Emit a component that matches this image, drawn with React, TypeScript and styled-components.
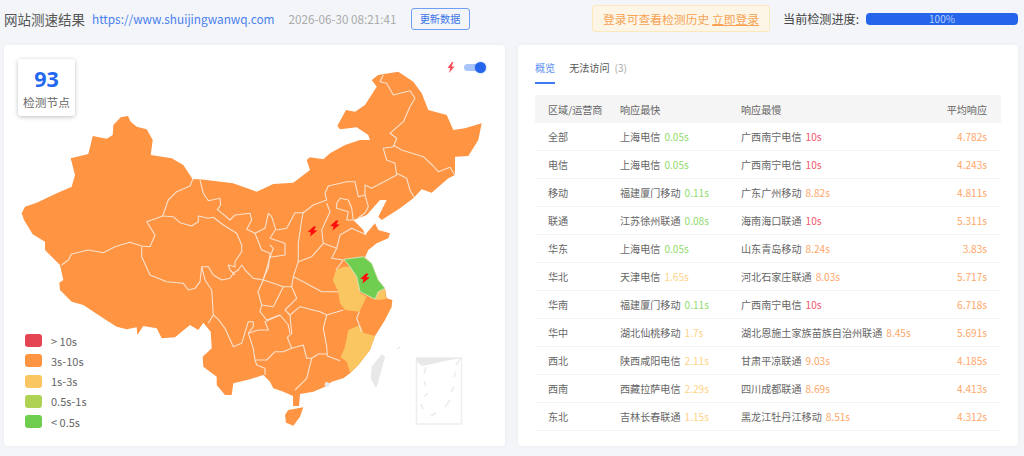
import { FC } from "react";
import styled, { createGlobalStyle } from "styled-components";

const GlobalStyle = createGlobalStyle`
  html, body {
    margin: 0;
    padding: 0;
    background: #f3f5f9;
    font-family: "Noto Sans CJK SC", "Noto Sans", sans-serif;
    color: #555;
  }
`;

const COLORS = {
  red: "#e54452",
  orange: "#ff9443",
  yellow: "#fac661",
  lime: "#aed254",
  green: "#6fce50",
};

const TEXT_COLORS: Record<string, string> = {
  green: "#8fdc6c",
  red: "#f2566e",
  orange: "#ffa769",
  yellow: "#ffd386",
};

const OUTLINE =
  "120.7,117.3 128,116 130.7,121.7 136.7,126.7 146.7,129.3 152.7,140 150.7,155 171.7,158.3 183.3,165 192.7,179.3 200,179.3 233,183.3 250,189.3 256.7,191.7 273.3,184 293.3,182.7 310,170 306.7,160 310,157.3 323.3,159.3 330,153.3 345,145 360,140 370,140 368.3,135 356.7,127.3 340,129.3 337.3,126 346,110 355,111.7 365,105 376.7,86.7 371.7,80 378.3,75 398.3,71.7 413.3,81.7 421.7,93.3 428.3,110 446.7,115 453.3,130 465,128.3 481.7,123.3 478.3,140 468.3,156 455,156.7 455,175 448.3,178.3 431.7,192.7 421.7,189.3 413.3,198.3 400,208.3 381.7,220 378.3,216.7 386.7,200 380,200 366.7,215 353.3,220 363.3,230 365,235 375,223.3 378.3,230 390,233.3 388.3,238.3 376.7,243.3 368.3,250 365,257.3 371.7,263.3 378.3,280 385,288.3 386.7,298.3 392.3,300 391.7,306.7 385,320 375,336 370,350 358.3,365 350,373.3 343.3,378.3 331.7,381.7 325,386.7 313.3,391.7 300,394 299,406 293,406 293,396 283.3,391.7 273.3,388.3 270,381.7 263.3,375 250,379.3 233.3,383.3 231.7,395 225,395 216.7,385 216.7,376.7 203.3,366.7 202.7,356.7 211.7,348.3 210.7,331.7 203.3,322.7 198.3,330 190,325 175,337.3 161.7,338.3 156.7,328.3 143.3,326 137.3,335 136.7,327.3 126.7,329.3 116.7,326.7 103.3,318.3 83.3,305 71.7,301.7 60,290 59.3,282.7 63.3,280 60,265 45,250 45,241.7 32.7,234.3 24,220 21.7,213.3 25,206.7 36.7,202.7 56.7,193.3 71.7,186.7 75,175 70.7,158.3 88.3,154 92.7,136 106.7,138.7 112.7,135 113.3,125";

const HAINAN = "288.3,410 303.3,407.3 300,416.7 293.3,425.7 286,422.7 285,415";

const JIANGSU =
  "344,259.3 363.3,256.7 371.7,263.3 378.3,280 385,288.3 378.3,291.7 375,299.3 366.7,295 360,291.7 356.7,276.7 350,266.7";
const ANHUI =
  "343.3,266.7 350,266.7 356.7,276.7 360,293.3 366.7,296.7 359.3,311.7 345,310 340,303.3 338.3,291.7 332.7,280 336,270";
const SHANGHAI = "378.3,291.7 385,289 386,299 378,300 375,299.3";
const FUJIAN =
  "360,325 363.3,332.7 375,336 370,350 358.3,365 350,372.7 346.7,361.7 340.7,357.3 345,346.7 348.3,330";

const BORDERS = [
  // northwest
  "192.7,179.3 190,186 176.7,191.7 168.3,200 162.7,216 146.7,221.7 155,235 150,246.7 141.7,246 130,242.3 115,246.7 103.3,252.7 88.3,250 71.7,254 68.3,260 61.7,265",
  "162.7,216 173.3,216.7 180,222.7 191.7,226 198.3,221.7 198.3,216 208.3,218.3 213.3,217.3 223.3,225 236.7,233.3 241.7,245 241.7,251.7 235,261.7 235,266.7 228.3,265 230,270 235,275",
  "141.7,246.7 141.7,256.7 150,275 166.7,281.7 183.3,283.3 188.3,290 195,288.3 200,281.7 201.7,266.7 208.3,266.7 213.3,275 221.7,280 230,278.3 233.3,273.3 238.3,270 241.7,265 245,270 253.3,278.3 263.3,280",
  "200,180 203.3,193.3 208.3,200.7 220,198.3 220.7,205 217.3,209.3 230,220 235,215 250,213.3 251.7,220 246.7,229.3 255,233.3 261.7,250 270,253.3 268.3,268.3 263.3,278.3",
  "255,233.3 265,228.3 268.3,213.3 271.7,216.7 275.7,229.3 270,238.3 285,243.3 285,255 270,257.3 273.3,248.3 270,245",
  // inner mongolia south edge and north china
  "276.7,230 286.7,228.3 295,212.7 303.3,212.7 313.3,205 326.7,200 325,193.3 328.3,186 346.7,181.7 355,181.7 358.3,196.7 365,195 365,185 371.7,188.3 396.7,175",
  "396.7,175 395,163.3 386.7,160 383.3,148.3 393.3,146.7 396.7,138.3 390,133.3 403.3,121.7 410,106.7 415,98.3 410,90.7 393.3,95 386.7,83.3 380,81.7 383.3,75",
  "393.3,145 401.7,150 423.3,156.7 433.3,166 438.3,171.7 450,167.3 455,175",
  "396.7,173.3 406.7,178.3 410,190 414,197.3",
  "365,195 368.3,206.7 365,213 358,218",
  "303.3,211.7 301.7,220 298.3,243.3 298.3,261.7 311.7,256.7 323.3,243.3 321.7,230 330,211.7 326.7,203.3",
  "323.3,243.3 336.7,248.3 340,235 351.7,228.3 366.7,235",
  "336.7,203.3 340,198.3 348.3,200 351.7,208.3 353.3,220 346.7,220 348.3,211.7 336.7,208.3 336.7,203.3",
  "336.7,248.3 331.7,258.3 343.3,260 336,270",
  // central
  "270,257.3 263.3,280 273.3,283.3 283.3,286.7 291.7,286.7 293.3,276.7 298.3,261.7",
  "293.3,276.7 303.3,281.7 321.7,291.7 338.3,291.7",
  "291.7,286.7 296.7,298.3 285,310 290,315 300,306.7 320,311.7 326.7,315 343.3,310",
  "326.7,315 323.3,328.3 326.7,346.7 327.3,356 340,360.7",
  "359.3,311.7 356.7,318.3 361.7,331.7",
  "327.3,354 318.3,354 311.7,358.3 306.7,378.3 295,390",
  "311.7,358.3 306.7,358.3 303.3,345 291.7,348.3 287.3,337.3 291.7,333.3 290,315",
  "291.7,348.3 283.3,351.7 275,351.7 266.7,360 255,360 253.3,348.3 248.3,333.3 258.3,330 268.3,330 265,321.7 280,315 288.3,325 290,333.3",
  "261.7,305 273.3,306.7 281.7,290 283.3,286.7",
  "263.3,280 258,292 261.7,305 260,311.7 266.7,320 280,315",
  "255,360 256.7,365 265,368.3 265,375",
  // southwest
  "201.7,266.7 205,280 211.7,290 213.3,315 208.3,323.3",
  "213.3,315 218.3,319.3 225,328.3 233.3,346.7 241.7,343.3 248.3,321.7 253.3,321.7 253.3,326.7 248.3,333.3",
];

const BOLTS = [
  { x: 312.5, y: 231.5 },
  { x: 335, y: 225.5 },
  { x: 365, y: 278.5 },
];

const DASHES = [
  "426,367 424,374",
  "424,381 426,386",
  "424,397 428,393",
  "421,404 423,409",
  "431,416 436,413",
  "445,407 450,400",
  "451,392 454,387",
  "454,377 456,372",
  "456,365 460,359",
];

const LEGEND = [
  { label: "> 10s", color: COLORS.red },
  { label: "3s-10s", color: COLORS.orange },
  { label: "1s-3s", color: COLORS.yellow },
  { label: "0.5s-1s", color: COLORS.lime },
  { label: "< 0.5s", color: COLORS.green },
];

type Level = "green" | "red" | "orange" | "yellow";

const ROWS: {
  area: string;
  fast: string;
  fastTime: string;
  fastLevel: Level;
  slow: string;
  slowTime: string;
  slowLevel: Level;
  avg: string;
}[] = [
  { area: "全部", fast: "上海电信", fastTime: "0.05s", fastLevel: "green", slow: "广西南宁电信", slowTime: "10s", slowLevel: "red", avg: "4.782s" },
  { area: "电信", fast: "上海电信", fastTime: "0.05s", fastLevel: "green", slow: "广西南宁电信", slowTime: "10s", slowLevel: "red", avg: "4.243s" },
  { area: "移动", fast: "福建厦门移动", fastTime: "0.11s", fastLevel: "green", slow: "广东广州移动", slowTime: "8.82s", slowLevel: "orange", avg: "4.811s" },
  { area: "联通", fast: "江苏徐州联通", fastTime: "0.08s", fastLevel: "green", slow: "海南海口联通", slowTime: "10s", slowLevel: "red", avg: "5.311s" },
  { area: "华东", fast: "上海电信", fastTime: "0.05s", fastLevel: "green", slow: "山东青岛移动", slowTime: "8.24s", slowLevel: "orange", avg: "3.83s" },
  { area: "华北", fast: "天津电信", fastTime: "1.65s", fastLevel: "yellow", slow: "河北石家庄联通", slowTime: "8.03s", slowLevel: "orange", avg: "5.717s" },
  { area: "华南", fast: "福建厦门移动", fastTime: "0.11s", fastLevel: "green", slow: "广西南宁电信", slowTime: "10s", slowLevel: "red", avg: "6.718s" },
  { area: "华中", fast: "湖北仙桃移动", fastTime: "1.7s", fastLevel: "yellow", slow: "湖北恩施土家族苗族自治州联通", slowTime: "8.45s", slowLevel: "orange", avg: "5.691s" },
  { area: "西北", fast: "陕西咸阳电信", fastTime: "2.11s", fastLevel: "yellow", slow: "甘肃平凉联通", slowTime: "9.03s", slowLevel: "orange", avg: "4.185s" },
  { area: "西南", fast: "西藏拉萨电信", fastTime: "2.29s", fastLevel: "yellow", slow: "四川成都联通", slowTime: "8.69s", slowLevel: "orange", avg: "4.413s" },
  { area: "东北", fast: "吉林长春联通", fastTime: "1.15s", fastLevel: "yellow", slow: "黑龙江牡丹江移动", slowTime: "8.51s", slowLevel: "orange", avg: "4.312s" },
];

const Bolt: FC<{ x: number; y: number }> = ({ x, y }) => (
  <polygon
    fill="#ff0d0d"
    points={`${x + 1},${y - 5} ${x - 4.8},${y + 0.6} ${x - 1.6},${y + 0.8} ${x - 2.4},${y + 5} ${x + 4.8},${y - 1} ${x + 1.4},${y - 1.2} ${x + 3.4},${y - 5}`}
  />
);

const ChinaMap: FC = () => (
  <MapSvg viewBox="4 45 501 401">
    <polygon points={OUTLINE} fill={COLORS.orange} />
    <polygon points={HAINAN} fill={COLORS.orange} />
    <polygon points={ANHUI} fill={COLORS.yellow} />
    <polygon points={FUJIAN} fill={COLORS.yellow} />
    <polygon points={SHANGHAI} fill={COLORS.yellow} />
    <polygon points={JIANGSU} fill={COLORS.green} stroke="#d9efcf" strokeWidth="0.8" />
    {BORDERS.map((line, index) => (
      <polyline
        key={index}
        points={line}
        fill="none"
        stroke="#f9e2cd"
        strokeWidth="1.1"
        strokeLinejoin="round"
      />
    ))}
    {BOLTS.map((bolt, index) => (
      <Bolt key={index} x={bolt.x} y={bolt.y} />
    ))}
    {/* taiwan and the small islands */}
    <polygon points="381.7,354 385,356.7 378.3,381.7 376,388.3 370.7,378.3 371.7,366.7" fill="#e8e8e8" />
    <circle cx="327" cy="384.5" r="2.4" fill="#e8e8e8" />
    <line x1="397" y1="349" x2="400" y2="347" stroke="#e8e8e8" strokeWidth="1.5" />
    {/* south china sea inset */}
    <rect x="416.5" y="358" width="45" height="66" fill="#fff" stroke="#eeeeee" strokeWidth="1.5" />
    <polygon points="417,358 461,358 445,361 432,364 422,366 417,362" fill="#e8e8e8" />
    {DASHES.map((dash, index) => (
      <polyline key={index} points={dash} fill="none" stroke="#ececec" strokeWidth="1.6" />
    ))}
  </MapSvg>
);

const App: FC = () => {
  return (
    <Page>
      <GlobalStyle />
      <Header>
        <Title>网站测速结果</Title>
        <SiteUrl>https://www.shuijingwanwq.com</SiteUrl>
        <CheckedAt>2026-06-30 08:21:41</CheckedAt>
        <RefreshButton>更新数据</RefreshButton>
        <LoginNotice>
          登录可查看检测历史 <u>立即登录</u>
        </LoginNotice>
        <ProgressLabel>当前检测进度:</ProgressLabel>
        <ProgressBar>100%</ProgressBar>
      </Header>
      <Content>
        <MapCard>
          <ChinaMap />
          <NodeCount>
            <NodeNumber>93</NodeNumber>
            <NodeLabel>检测节点</NodeLabel>
          </NodeCount>
          <BoltToggle>
            <svg width="8" height="11" viewBox="0 0 8 11">
              <polygon points="5,0 0.5,6 3.2,6 2,11 7.5,4.4 4.6,4.4 6.4,0" fill="#ff4d5a" />
            </svg>
            <ToggleTrack>
              <ToggleKnob />
            </ToggleTrack>
          </BoltToggle>
          <Legend>
            {LEGEND.map((item) => (
              <LegendRow key={item.label}>
                <LegendSwatch $color={item.color} />
                {item.label}
              </LegendRow>
            ))}
          </Legend>
        </MapCard>
        <TableCard>
          <Tabs>
            <Tab $active>概览</Tab>
            <Tab>
              无法访问<TabCount>(3)</TabCount>
            </Tab>
          </Tabs>
          <HeadRow>
            <span>区域/运营商</span>
            <span>响应最快</span>
            <span>响应最慢</span>
            <AvgHead>平均响应</AvgHead>
          </HeadRow>
          {ROWS.map((row) => (
            <Row key={row.area}>
              <span>{row.area}</span>
              <span>
                {row.fast}
                <Time $level={row.fastLevel}>{row.fastTime}</Time>
              </span>
              <span>
                {row.slow}
                <Time $level={row.slowLevel}>{row.slowTime}</Time>
              </span>
              <Avg>{row.avg}</Avg>
            </Row>
          ))}
        </TableCard>
      </Content>
    </Page>
  );
};

const Page = styled.div`
  width: 1024px;
  height: 456px;
  overflow: hidden;
  box-sizing: border-box;
  padding: 0 6px 0 4px;
`;

const Header = styled.div`
  display: flex;
  align-items: center;
  height: 37px;
  margin-bottom: 8px;
`;

const Title = styled.div`
  font-size: 13.5px;
  color: #555;
`;

const SiteUrl = styled.a`
  margin-left: 7px;
  font-size: 11.8px;
  color: #4a80ee;
`;

const CheckedAt = styled.div`
  margin-left: 14px;
  font-size: 11.7px;
  color: #aaa;
`;

const RefreshButton = styled.button`
  margin-left: 14px;
  width: 59px;
  height: 22px;
  padding: 0;
  background: transparent;
  border: 1px solid #6f9ff2;
  border-radius: 3px;
  color: #3d76e8;
  font-family: inherit;
  font-size: 10.2px;
`;

const LoginNotice = styled.div`
  margin-left: auto;
  width: 178px;
  height: 27px;
  box-sizing: border-box;
  border: 1px solid #fbe8bd;
  border-radius: 3px;
  background: #fdf6e6;
  color: #f5a254;
  font-size: 11.8px;
  line-height: 25px;
  text-align: center;
`;

const ProgressLabel = styled.div`
  margin-left: 13px;
  font-size: 12.1px;
  color: #444;
`;

const ProgressBar = styled.div`
  margin-left: 7px;
  width: 152px;
  height: 12px;
  border-radius: 4px;
  background: #2565ec;
  color: #b9d0fb;
  font-size: 10px;
  line-height: 12px;
  text-align: center;
`;

const Content = styled.div`
  display: flex;
  gap: 13px;
`;

const Card = styled.div`
  background: #fff;
  border-radius: 4px;
  height: 401px;
  box-shadow: 0 0 4px rgba(0, 0, 0, 0.04);
`;

const MapCard = styled(Card)`
  position: relative;
  width: 501px;
`;

const MapSvg = styled.svg`
  display: block;
  width: 501px;
  height: 401px;
`;

const NodeCount = styled.div`
  position: absolute;
  left: 14px;
  top: 14px;
  width: 57px;
  height: 57px;
  border-radius: 3px;
  background: #fff;
  box-shadow: 0 1px 4px rgba(0, 0, 0, 0.25);
  text-align: center;
`;

const NodeNumber = styled.div`
  margin-top: 5px;
  font-size: 21.5px;
  font-weight: 700;
  line-height: 29px;
  color: #2468f2;
  font-family: "Noto Sans", sans-serif;
`;

const NodeLabel = styled.div`
  font-size: 11.7px;
  line-height: 17px;
  color: #666;
`;

const BoltToggle = styled.div`
  position: absolute;
  right: 20px;
  top: 17px;
  display: flex;
  align-items: center;
  gap: 9px;
`;

const ToggleTrack = styled.div`
  position: relative;
  width: 21px;
  height: 7px;
  border-radius: 4px;
  background: #a9c5fc;
`;

const ToggleKnob = styled.div`
  position: absolute;
  right: -1px;
  top: -2px;
  width: 11px;
  height: 11px;
  border-radius: 50%;
  background: #2565ec;
  box-shadow: 0 0 2px rgba(37, 101, 236, 0.5);
`;

const Legend = styled.div`
  position: absolute;
  left: 21px;
  bottom: 18px;
  display: flex;
  flex-direction: column;
  gap: 7.2px;
`;

const LegendRow = styled.div`
  display: flex;
  align-items: center;
  height: 13px;
  font-size: 11px;
  color: #666;
`;

const LegendSwatch = styled.span<{ $color: string }>`
  width: 17px;
  height: 13px;
  margin-right: 9px;
  border-radius: 3px;
  background: ${(props) => props.$color};
`;

const TableCard = styled(Card)`
  width: 500px;
  box-sizing: border-box;
  padding: 12px 17px 0;
`;

const Tabs = styled.div`
  display: flex;
  gap: 14px;
  margin-bottom: 11px;
`;

const Tab = styled.div<{ $active?: boolean }>`
  height: 27px;
  box-sizing: border-box;
  line-height: 22px;
  font-size: 10.1px;
  color: ${(props) => (props.$active ? "#5a8ff2" : "#555")};
  border-bottom: 2px solid ${(props) => (props.$active ? "#3f7bf0" : "transparent")};
`;

const TabCount = styled.span`
  margin-left: 5px;
  color: #aaa;
`;

const HeadRow = styled.div`
  display: grid;
  grid-template-columns: 72px 121px 1fr auto;
  align-items: center;
  height: 28px;
  padding: 0 14px 0 13px;
  background: #f5f5f5;
  font-size: 10.1px;
  color: #666;
`;

const Row = styled(HeadRow)`
  background: #fff;
  border-bottom: 1px solid #f3f3f3;
  box-sizing: border-box;
  color: #666;
`;

const AvgHead = styled.span`
  text-align: right;
`;

const Avg = styled.span`
  color: ${TEXT_COLORS.orange};
  text-align: right;
`;

const Time = styled.span<{ $level: Level }>`
  margin-left: 4px;
  color: ${(props) => TEXT_COLORS[props.$level]};
`;

export default App;
